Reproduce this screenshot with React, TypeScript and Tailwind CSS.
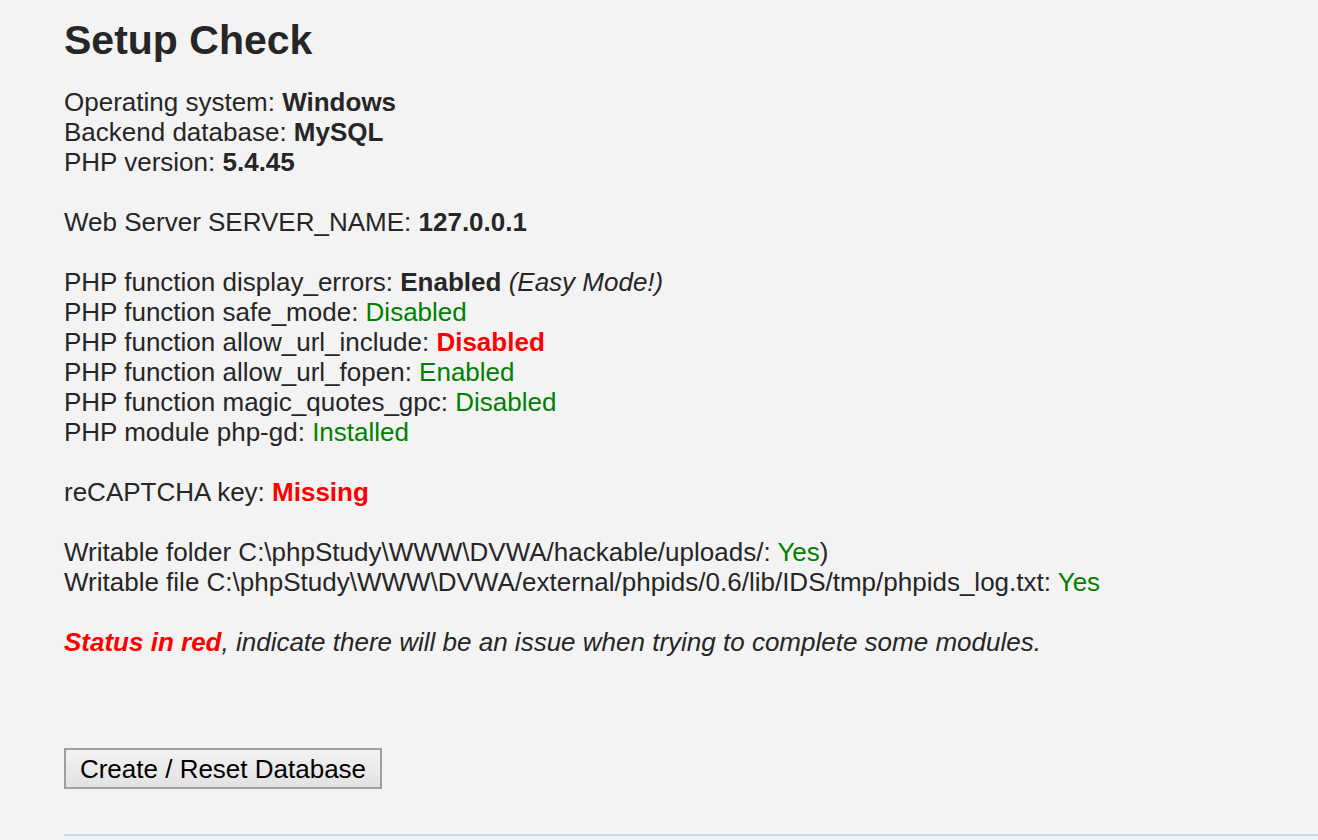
export default function App() {
  const G = ({ children }: { children: React.ReactNode }) => (
    <span className="text-[#008000]">{children}</span>
  );
  const R = ({ children }: { children: React.ReactNode }) => (
    <span className="text-[#ff0000] font-bold">{children}</span>
  );
  return (
    <div
      className="min-h-[840px] w-full bg-[#f3f3f3] text-[#262626] pl-[64px]"
      style={{ fontFamily: '"Liberation Sans", Arial, sans-serif' }}
    >
      <div className="pt-[17px]">
        <h1 className="text-[41px] leading-[46px] font-bold text-[#262626]">Setup Check</h1>
      </div>
      <div className="mt-[24px] text-[26px] leading-[30px]">
        Operating system: <b>Windows</b>
        <br />
        Backend database: <b>MySQL</b>
        <br />
        PHP version: <b>5.4.45</b>
        <br />
        <br />
        Web Server SERVER_NAME: <b>127.0.0.1</b>
        <br />
        <br />
        PHP function display_errors: <b>Enabled</b> <i>(Easy Mode!)</i>
        <br />
        PHP function safe_mode: <G>Disabled</G>
        <br />
        PHP function allow_url_include: <R>Disabled</R>
        <br />
        PHP function allow_url_fopen: <G>Enabled</G>
        <br />
        PHP function magic_quotes_gpc: <G>Disabled</G>
        <br />
        PHP module php-gd: <G>Installed</G>
        <br />
        <br />
        reCAPTCHA key: <R>Missing</R>
        <br />
        <br />
        Writable folder C:\phpStudy\WWW\DVWA/hackable/uploads/: <G>Yes</G>)
        <br />
        Writable file C:\phpStudy\WWW\DVWA/external/phpids/0.6/lib/IDS/tmp/phpids_log.txt: <G>Yes</G>
        <br />
        <br />
        <i>
          <span className="text-[#ff0000] font-bold">Status in red</span>, indicate there will be an issue when trying to complete some modules.
        </i>
      </div>
      <div className="mt-[91px]">
        <button className="h-[41px] w-[318px] border-2 border-[#a0a0a0] bg-gradient-to-b from-[#f2f2f2] to-[#e2e2e2] text-[26px] leading-[30px] text-black flex items-center justify-center">
          Create / Reset Database
        </button>
      </div>
      <div className="mt-[45px] border-t-2 border-[#c4daf7]" />
    </div>
  );
}
